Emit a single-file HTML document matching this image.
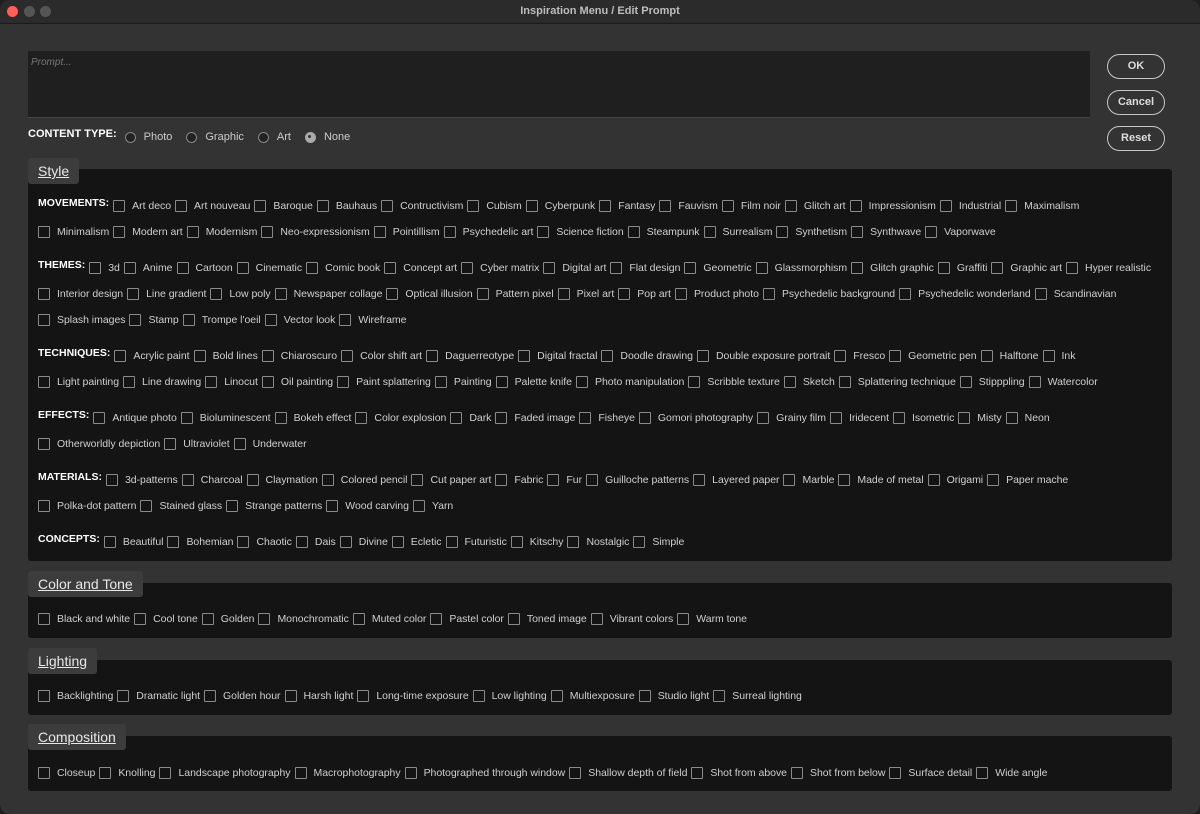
<!DOCTYPE html>
<html><head><meta charset="utf-8"><style>
*{box-sizing:border-box;margin:0;padding:0}
body{width:1200px;height:814px;background:#1e1e1e;font-family:"Liberation Sans",sans-serif;color:#d0d0d0;overflow:hidden;position:relative}
.win{position:absolute;left:0;top:0;width:1200px;height:814px;background:#333;border-radius:10px;overflow:hidden}
.title{position:absolute;left:0;top:0;width:1200px;height:24px;background:#2b2b2b;border-bottom:1px solid #1a1a1a;text-align:center;font-size:11px;font-weight:bold;color:#bdbdbd;line-height:23px}
.dot{position:absolute;top:6px;width:11px;height:11px;border-radius:50%;background:#555}
.prompt{position:absolute;left:28px;top:51px;width:1062px;height:67px;background:#1f1f1f;border-bottom:1px solid #444}
.prompt span{position:absolute;left:3px;top:6px;font-size:10px;font-style:italic;color:#777}
.btn{position:absolute;left:1107px;width:58px;height:25px;border:1.5px solid #c8c8c8;border-radius:13px;text-align:center;font-size:11px;font-weight:bold;color:#ddd;line-height:22px}
.ct{position:absolute;left:28px;top:131px;font-size:11px;display:flex;align-items:center;color:#ccc}
.ct b{color:#fff;margin-right:8px;position:relative;top:-3px}
.rad{width:11px;height:11px;border-radius:50%;border:1.5px solid #888;background:#222;margin-right:8px;display:inline-block}
.rad.on{background:#aaa;border-color:#aaa;position:relative}
.rad.on:after{content:"";position:absolute;left:2.5px;top:2.5px;width:3px;height:3px;border-radius:50%;background:#333}
.ct span.l{margin-right:14px}
.tab{position:absolute;left:28px;height:26px;background:#3c3c3c;border-radius:3px;padding:0 10px;font-size:14px;color:#e8e8e8;text-decoration:underline;line-height:26px}
.panel{position:absolute;left:28px;width:1144px;background:#141414;border-radius:3px}
.row{position:absolute;left:38px;display:flex;align-items:center;font-size:10.5px;letter-spacing:-0.03px;color:#cfcfcf;white-space:nowrap;height:14px}
.row b{color:#fff;font-weight:bold;margin-right:4px;position:relative;top:-3px;letter-spacing:0}
.row i{display:inline-block;width:12px;height:12px;border:1.3px solid #8a8a8a;border-radius:1px;margin-right:7px;flex:none}
.row s{text-decoration:none;margin-right:4px}
</style></head><body><div class="win">
<div class="title">Inspiration Menu / Edit Prompt</div>
<div class="dot" style="left:7px;background:#fe5f57"></div><div class="dot" style="left:24px"></div><div class="dot" style="left:40px"></div>
<div class="prompt"><span>Prompt...</span></div>
<div class="btn" style="top:54px">OK</div>
<div class="btn" style="top:90px">Cancel</div>
<div class="btn" style="top:126px">Reset</div>
<div class="ct" style="top:131px"><b>CONTENT TYPE:</b><span class="rad"></span><span class="l">Photo</span><span class="rad"></span><span class="l">Graphic</span><span class="rad"></span><span class="l">Art</span><span class="rad on"></span><span class="l">None</span></div>

<div class="panel" style="top:169px;height:392px"></div>
<div class="tab" style="top:158px">Style</div>
<div class="row" style="top:199px"><b>MOVEMENTS:</b><i></i><s>Art deco</s><i></i><s>Art nouveau</s><i></i><s>Baroque</s><i></i><s>Bauhaus</s><i></i><s>Contructivism</s><i></i><s>Cubism</s><i></i><s>Cyberpunk</s><i></i><s>Fantasy</s><i></i><s>Fauvism</s><i></i><s>Film noir</s><i></i><s>Glitch art</s><i></i><s>Impressionism</s><i></i><s>Industrial</s><i></i><s>Maximalism</s></div>
<div class="row" style="top:225px"><i></i><s>Minimalism</s><i></i><s>Modern art</s><i></i><s>Modernism</s><i></i><s>Neo-expressionism</s><i></i><s>Pointillism</s><i></i><s>Psychedelic art</s><i></i><s>Science fiction</s><i></i><s>Steampunk</s><i></i><s>Surrealism</s><i></i><s>Synthetism</s><i></i><s>Synthwave</s><i></i><s>Vaporwave</s></div>
<div class="row" style="top:261px"><b>THEMES:</b><i></i><s>3d</s><i></i><s>Anime</s><i></i><s>Cartoon</s><i></i><s>Cinematic</s><i></i><s>Comic book</s><i></i><s>Concept art</s><i></i><s>Cyber matrix</s><i></i><s>Digital art</s><i></i><s>Flat design</s><i></i><s>Geometric</s><i></i><s>Glassmorphism</s><i></i><s>Glitch graphic</s><i></i><s>Graffiti</s><i></i><s>Graphic art</s><i></i><s>Hyper realistic</s></div>
<div class="row" style="top:287px"><i></i><s>Interior design</s><i></i><s>Line gradient</s><i></i><s>Low poly</s><i></i><s>Newspaper collage</s><i></i><s>Optical illusion</s><i></i><s>Pattern pixel</s><i></i><s>Pixel art</s><i></i><s>Pop art</s><i></i><s>Product photo</s><i></i><s>Psychedelic background</s><i></i><s>Psychedelic wonderland</s><i></i><s>Scandinavian</s></div>
<div class="row" style="top:313px"><i></i><s>Splash images</s><i></i><s>Stamp</s><i></i><s>Trompe l'oeil</s><i></i><s>Vector look</s><i></i><s>Wireframe</s></div>
<div class="row" style="top:349px"><b>TECHNIQUES:</b><i></i><s>Acrylic paint</s><i></i><s>Bold lines</s><i></i><s>Chiaroscuro</s><i></i><s>Color shift art</s><i></i><s>Daguerreotype</s><i></i><s>Digital fractal</s><i></i><s>Doodle drawing</s><i></i><s>Double exposure portrait</s><i></i><s>Fresco</s><i></i><s>Geometric pen</s><i></i><s>Halftone</s><i></i><s>Ink</s></div>
<div class="row" style="top:375px"><i></i><s>Light painting</s><i></i><s>Line drawing</s><i></i><s>Linocut</s><i></i><s>Oil painting</s><i></i><s>Paint splattering</s><i></i><s>Painting</s><i></i><s>Palette knife</s><i></i><s>Photo manipulation</s><i></i><s>Scribble texture</s><i></i><s>Sketch</s><i></i><s>Splattering technique</s><i></i><s>Stipppling</s><i></i><s>Watercolor</s></div>
<div class="row" style="top:411px"><b>EFFECTS:</b><i></i><s>Antique photo</s><i></i><s>Bioluminescent</s><i></i><s>Bokeh effect</s><i></i><s>Color explosion</s><i></i><s>Dark</s><i></i><s>Faded image</s><i></i><s>Fisheye</s><i></i><s>Gomori photography</s><i></i><s>Grainy film</s><i></i><s>Iridecent</s><i></i><s>Isometric</s><i></i><s>Misty</s><i></i><s>Neon</s></div>
<div class="row" style="top:437px"><i></i><s>Otherworldly depiction</s><i></i><s>Ultraviolet</s><i></i><s>Underwater</s></div>
<div class="row" style="top:473px"><b>MATERIALS:</b><i></i><s>3d-patterns</s><i></i><s>Charcoal</s><i></i><s>Claymation</s><i></i><s>Colored pencil</s><i></i><s>Cut paper art</s><i></i><s>Fabric</s><i></i><s>Fur</s><i></i><s>Guilloche patterns</s><i></i><s>Layered paper</s><i></i><s>Marble</s><i></i><s>Made of metal</s><i></i><s>Origami</s><i></i><s>Paper mache</s></div>
<div class="row" style="top:499px"><i></i><s>Polka-dot pattern</s><i></i><s>Stained glass</s><i></i><s>Strange patterns</s><i></i><s>Wood carving</s><i></i><s>Yarn</s></div>
<div class="row" style="top:535px"><b>CONCEPTS:</b><i></i><s>Beautiful</s><i></i><s>Bohemian</s><i></i><s>Chaotic</s><i></i><s>Dais</s><i></i><s>Divine</s><i></i><s>Ecletic</s><i></i><s>Futuristic</s><i></i><s>Kitschy</s><i></i><s>Nostalgic</s><i></i><s>Simple</s></div>

<div class="panel" style="top:583px;height:55px"></div>
<div class="tab" style="top:571px">Color and Tone</div>
<div class="row" style="top:612px"><i></i><s>Black and white</s><i></i><s>Cool tone</s><i></i><s>Golden</s><i></i><s>Monochromatic</s><i></i><s>Muted color</s><i></i><s>Pastel color</s><i></i><s>Toned image</s><i></i><s>Vibrant colors</s><i></i><s>Warm tone</s></div>

<div class="panel" style="top:660px;height:55px"></div>
<div class="tab" style="top:648px">Lighting</div>
<div class="row" style="top:689px"><i></i><s>Backlighting</s><i></i><s>Dramatic light</s><i></i><s>Golden hour</s><i></i><s>Harsh light</s><i></i><s>Long-time exposure</s><i></i><s>Low lighting</s><i></i><s>Multiexposure</s><i></i><s>Studio light</s><i></i><s>Surreal lighting</s></div>

<div class="panel" style="top:736px;height:55px"></div>
<div class="tab" style="top:724px">Composition</div>
<div class="row" style="top:766px"><i></i><s>Closeup</s><i></i><s>Knolling</s><i></i><s>Landscape photography</s><i></i><s>Macrophotography</s><i></i><s>Photographed through window</s><i></i><s>Shallow depth of field</s><i></i><s>Shot from above</s><i></i><s>Shot from below</s><i></i><s>Surface detail</s><i></i><s>Wide angle</s></div>
</div></body></html>
